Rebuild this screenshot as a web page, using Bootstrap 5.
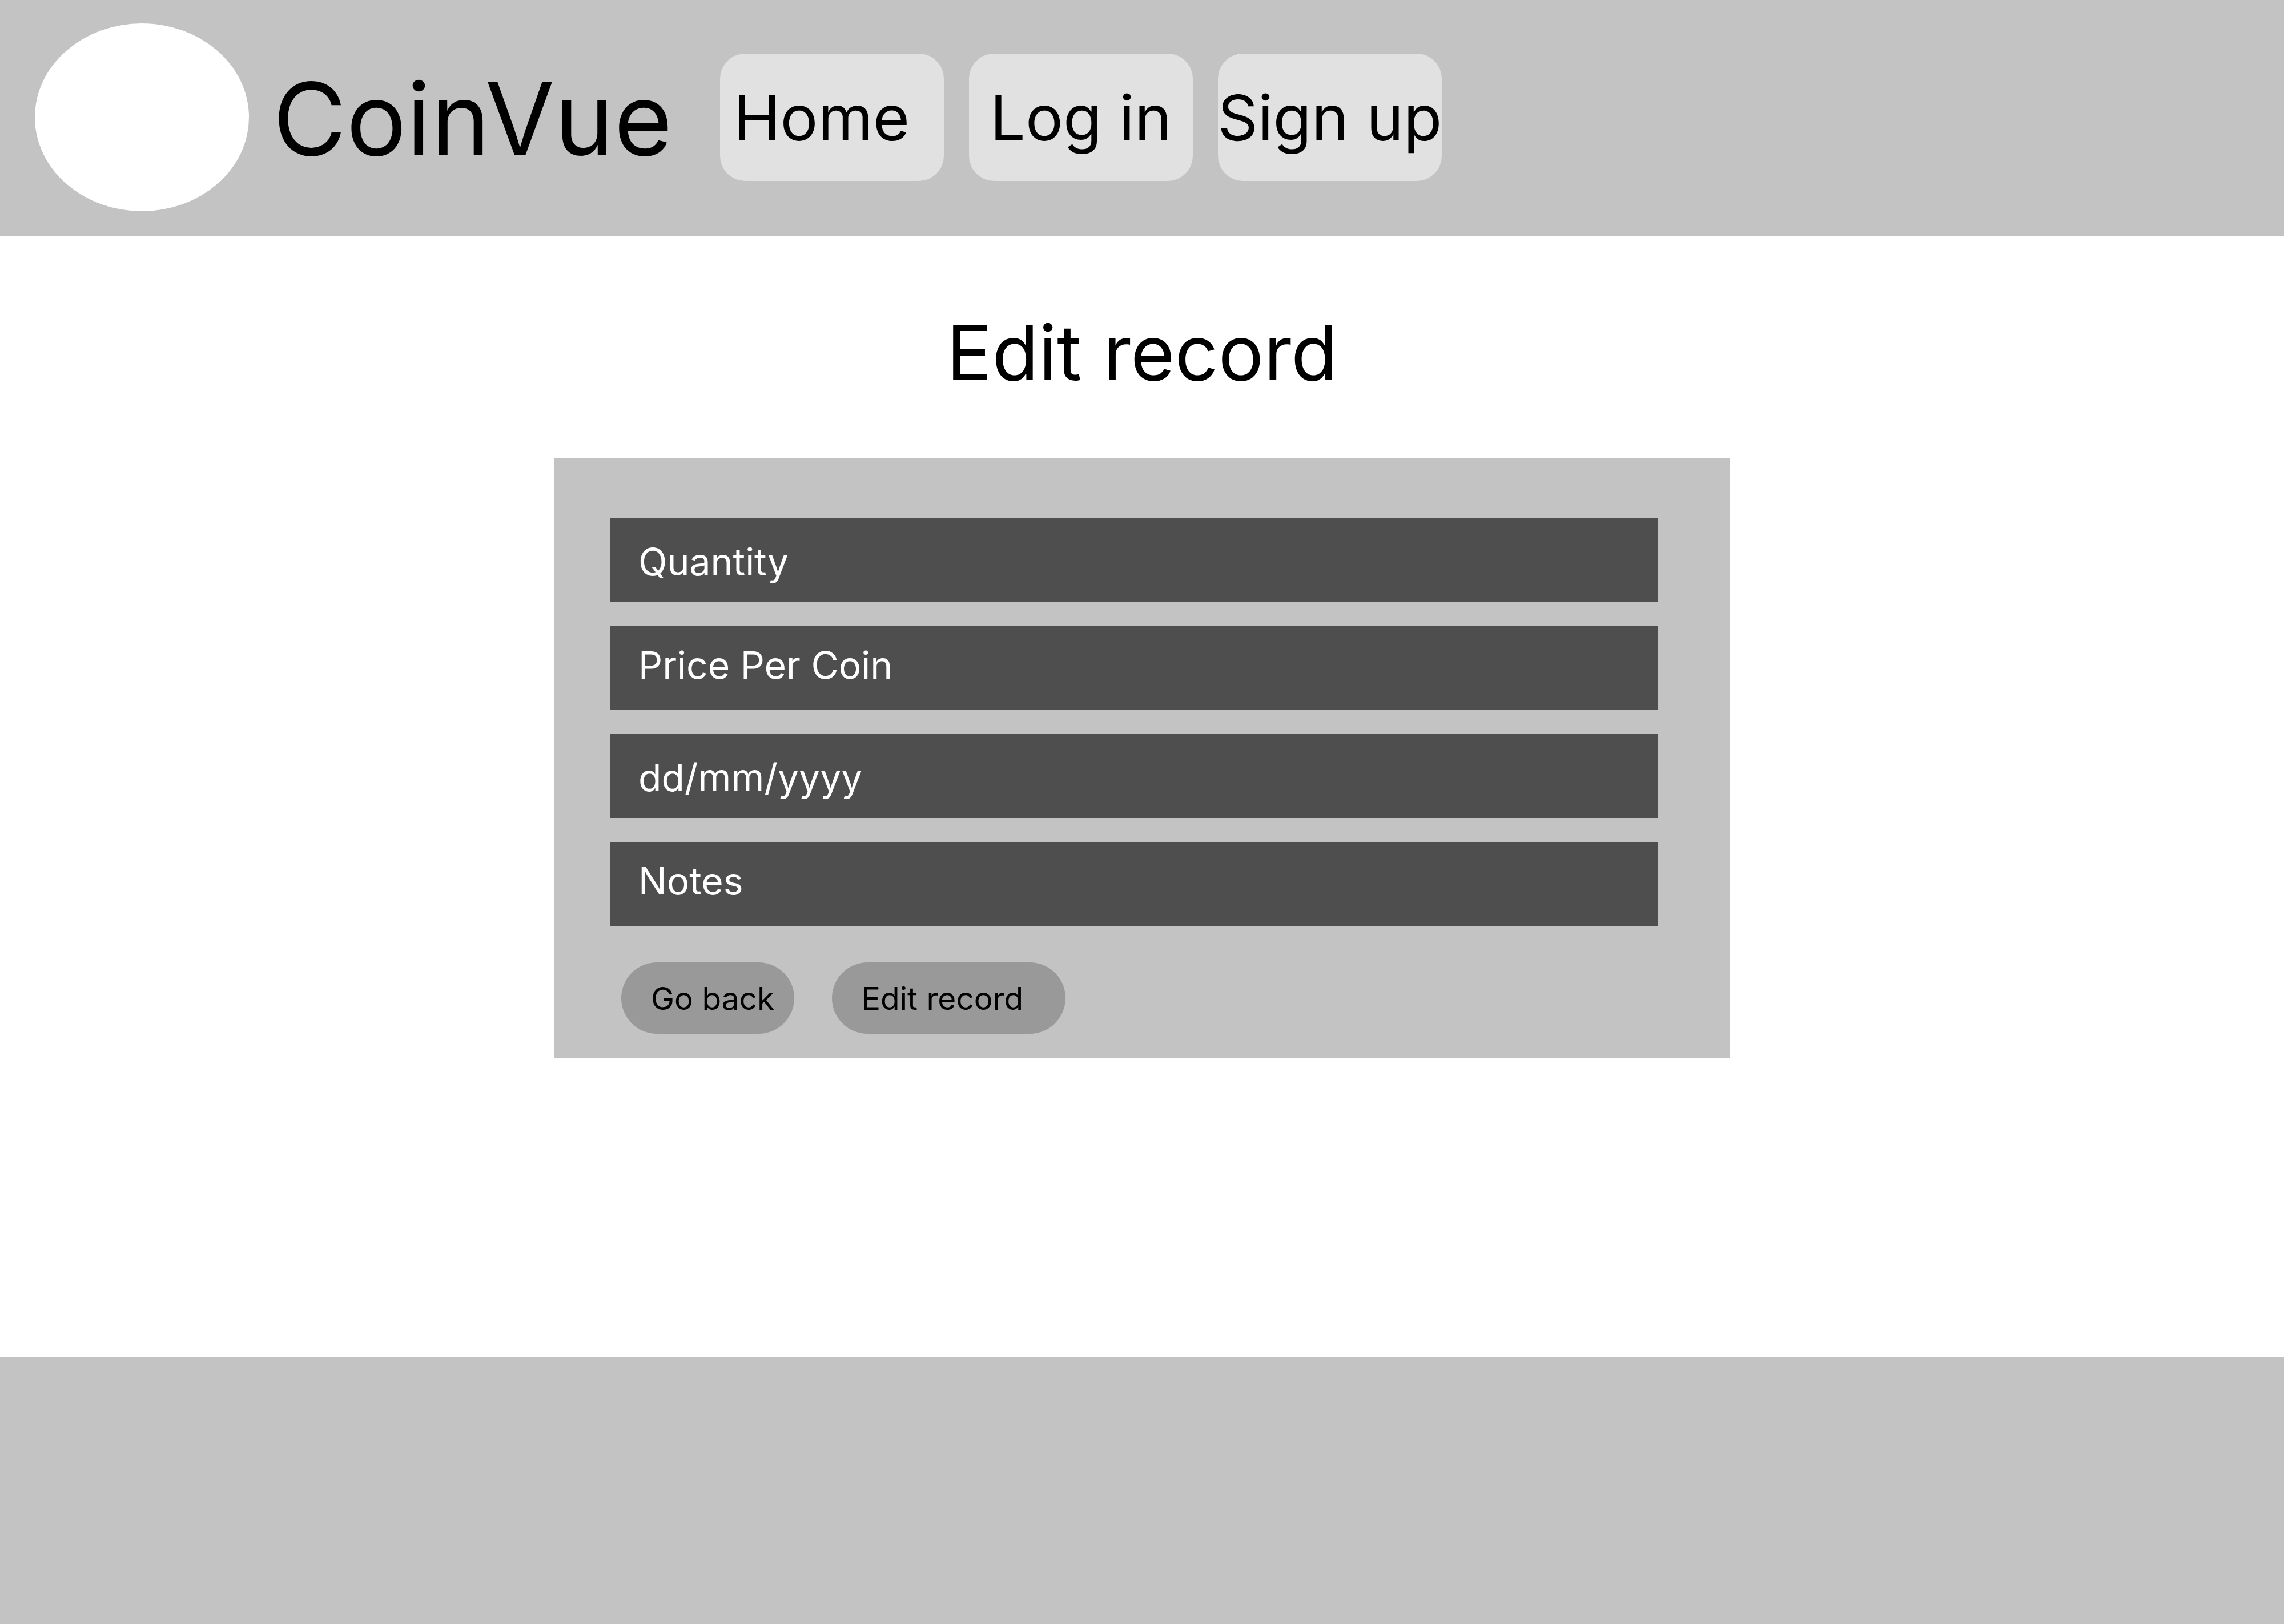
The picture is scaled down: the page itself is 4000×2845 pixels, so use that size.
<!DOCTYPE html>
<html lang="en">
<head>
<meta charset="utf-8">
<meta name="viewport" content="width=device-width, initial-scale=1">
<title>CoinVue - Edit record</title>
<link href="https://cdn.jsdelivr.net/npm/bootstrap@5.3.0/dist/css/bootstrap.min.css" rel="stylesheet">
<style>
  body { font-family: Inter, "Liberation Sans", sans-serif; color: #000; background: #fff; }
  .site-header { background: #c3c3c3; padding: 41px 61px 44px; }
  .brand-link { gap: 42px; font-size: 176px; line-height: 216px; color: #000; }
  .brand-logo { width: 375px; height: 329px; background: #fff; }
  .site-nav { gap: 44px; margin-left: 83px; }
  .nav-tile { width: 392px; height: 223px; border-radius: 44px; background: #e1e1e1; color: #000; font-size: 110px; line-height: 136px; white-space: nowrap; }
  .nav-start { padding-left: 24px; }
  .page-title { font-size: 133px; line-height: 160px; font-weight: 400; margin: 124px 0 105px; }
  .record-panel { max-width: 2058px; background: #c3c3c3; padding: 105px 125px 42px 97px; }
  .record-fields { gap: 42px; }
  .record-input, .record-input:focus { height: 147px; border: 0; border-radius: 0; background: #4e4e4e; color: #fff; font-size: 66px; line-height: 80px; padding: 4px 50px 0; }
  .record-input.text-high { padding: 0 50px 12px; }
  .record-input::placeholder { color: #fff; opacity: 1; }
  .record-actions { gap: 66px; margin: 64px 0 0 20px; }
  .pill-btn, .pill-btn:hover { height: 125px; background: #999; color: #000; border: 0; font-size: 55px; line-height: 68px; padding: 0 52px; text-align: left; white-space: nowrap; }
  .pill-back { width: 303px; }
  .pill-edit { width: 409px; }
  .site-footer { background: #c3c3c3; height: 467px; }
</style>
<script src="https://cdn.jsdelivr.net/npm/bootstrap@5.3.0/dist/js/bootstrap.bundle.min.js"></script>
</head>
<body class="d-flex flex-column min-vh-100">
  <header class="site-header d-flex flex-wrap align-items-center">
    <a class="brand-link d-flex align-items-center text-decoration-none" href="#">
      <span class="brand-logo rounded-circle"></span>
      <span class="pt-1">CoinVue</span>
    </a>
    <nav class="site-nav d-flex flex-wrap" aria-label="Main">
      <a class="nav-tile nav-start d-flex align-items-center text-decoration-none" href="#">Home</a>
      <a class="nav-tile d-flex align-items-center justify-content-center text-decoration-none" href="#">Log in</a>
      <a class="nav-tile d-flex align-items-center justify-content-center text-decoration-none" href="#">Sign up</a>
    </nav>
  </header>

  <main class="flex-grow-1">
    <h1 class="page-title text-center">Edit record</h1>
    <form class="record-panel w-100 mx-auto">
      <div class="record-fields d-flex flex-column">
        <input class="form-control record-input" type="text" placeholder="Quantity" aria-label="Quantity">
        <input class="form-control record-input text-high" type="text" placeholder="Price Per Coin" aria-label="Price Per Coin">
        <input class="form-control record-input" type="text" placeholder="dd/mm/yyyy" aria-label="dd/mm/yyyy">
        <input class="form-control record-input text-high" type="text" placeholder="Notes" aria-label="Notes">
      </div>
      <div class="record-actions d-flex flex-wrap">
        <button class="btn pill-btn pill-back rounded-pill" type="button">Go back</button>
        <button class="btn pill-btn pill-edit rounded-pill" type="submit">Edit record</button>
      </div>
    </form>
  </main>

  <footer class="site-footer"></footer>
</body>
</html>
